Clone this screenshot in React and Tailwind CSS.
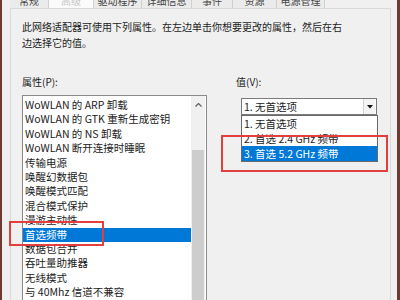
import React from 'react';

const tabs = [
  { name: '常规', cls: 'w-[39px]' },
  { name: '高级', cls: 'w-[45px] bg-[#fbfbfb] text-[#c8c8c8]', active: true },
  { name: '驱动程序', cls: 'w-[48px]' },
  { name: '详细信息', cls: 'w-[50px]' },
  { name: '事件', cls: 'w-[41px]' },
  { name: '资源', cls: 'w-[44px]' },
  { name: '电源管理', cls: 'w-[48px]' },
];

const props = [
  'WoWLAN 的 ARP 卸载',
  'WoWLAN 的 GTK 重新生成密钥',
  'WoWLAN 的 NS 卸载',
  'WoWLAN 断开连接时睡眠',
  '传输电源',
  '唤醒幻数据包',
  '唤醒模式匹配',
  '混合模式保护',
  '漫游主动性',
  '首选频带',
  '数据包合并',
  '吞吐量助推器',
  '无线模式',
  '与 40Mhz 信道不兼容',
];

const options = ['1. 无首选项', '2. 首选 2.4 GHz 频带', '3. 首选 5.2 GHz 频带'];

export default function App() {
  return (
    <div className="relative w-[400px] h-[300px] overflow-hidden bg-[#f0f0f0] flex font-['Noto_Sans_CJK_SC',sans-serif] text-[#1c1c1c]">
      {/* window frame left */}
      <div className="w-[2px] shrink-0 bg-[#6e3b30]" />

      <div className="w-[389px] shrink-0 pl-[8px] flex flex-col">
        {/* tab strip, cut at the top */}
        <div className="h-[8px] shrink-0 flex overflow-hidden">
          {tabs.map((t) => (
            <div
              key={t.name}
              className={`h-[8px] shrink-0 border-r border-[#d0d0d0] flex justify-center overflow-hidden text-[10px] leading-[10px] text-[#444] ${t.active ? '' : 'bg-[#ebebeb]'} ${t.cls}`}
            >
              <span className="-mt-[4px] whitespace-nowrap">{t.name}</span>
            </div>
          ))}
        </div>

        {/* tab page */}
        <div className="w-[381px] flex-1 min-h-0 border-l border-t border-r border-[#d9d9d9] pl-[11px] pt-[10px]">
          <p className="text-[10px] leading-[16px] whitespace-nowrap">
            此网络适配器可使用下列属性。在左边单击你想要更改的属性，然后在右
            <br />
            边选择它的值。
          </p>

          <div className="flex mt-[25px]">
            {/* left column */}
            <div className="w-[185px] flex flex-col">
              <div className="text-[10px] leading-[12px]">属性(P):</div>
              <div className="mt-[7px] h-[240px] shrink-0 border border-[#8a8a8a] bg-white flex">
                <div className="w-[168px] pt-[2px]">
                  {props.map((p) => (
                    <div
                      key={p}
                      className={`h-[14.4px] leading-[14.4px] pl-[2px] text-[10.5px] whitespace-nowrap ${p === '首选频带' ? 'bg-[#0078d7] text-white' : ''}`}
                    >
                      {p}
                    </div>
                  ))}
                </div>
                <div className="w-[14px] bg-[#f0f0f0] flex flex-col">
                  <div className="h-[18px] flex items-center justify-center">
                    <svg width="7" height="4" viewBox="0 0 7 4">
                      <path d="M0.5 3.5 L3.5 0.5 L6.5 3.5" fill="none" stroke="#606060" strokeWidth="1.2" />
                    </svg>
                  </div>
                  <div className="h-[36px]" />
                  <div className="flex-1 mx-[1px] bg-[#cdcdcd]" />
                </div>
              </div>
            </div>

            {/* right column */}
            <div className="ml-[29px] flex flex-col">
              <div className="text-[10px] leading-[12px]">值(V):</div>
              <div className="ml-[5px] mt-[10px] w-[136px] flex flex-col">
                <div className="h-[17px] border border-[#7a7a7a] bg-white flex items-center">
                  <span className="flex-1 pl-[2px] text-[10.5px] leading-[15px] whitespace-nowrap">1. 无首选项</span>
                  <div className="w-[12px] h-[15px] mr-[1px] bg-[#f4f4f4] border-l border-[#d4d4d4] flex items-center justify-center">
                    <svg width="6" height="4" viewBox="0 0 6 4">
                      <path d="M0 0 H6 L3 3.5 Z" fill="#111" />
                    </svg>
                  </div>
                </div>
                <div className="w-[137px] border border-[#6a6a6a] bg-white">
                  {options.map((o, i) => (
                    <div
                      key={o}
                      className={`h-[15px] leading-[15px] pl-[2px] text-[10.5px] whitespace-nowrap ${i === 2 ? 'bg-[#0078d7] text-white' : ''}`}
                    >
                      {o}
                    </div>
                  ))}
                </div>
              </div>
            </div>
          </div>
        </div>
      </div>

      <div className="w-[6px] shrink-0" />
      {/* window frame right */}
      <div className="w-[3px] shrink-0 bg-[#6e3b30]" />

      {/* red highlight boxes drawn over the dialog */}
      <div className="absolute left-[9px] top-[221px] w-[95px] h-[25px] border-2 border-[#e2403f]" />
      <div className="absolute left-[221px] top-[135px] w-[167px] h-[37px] border-2 border-[#e2403f]" />
    </div>
  );
}
